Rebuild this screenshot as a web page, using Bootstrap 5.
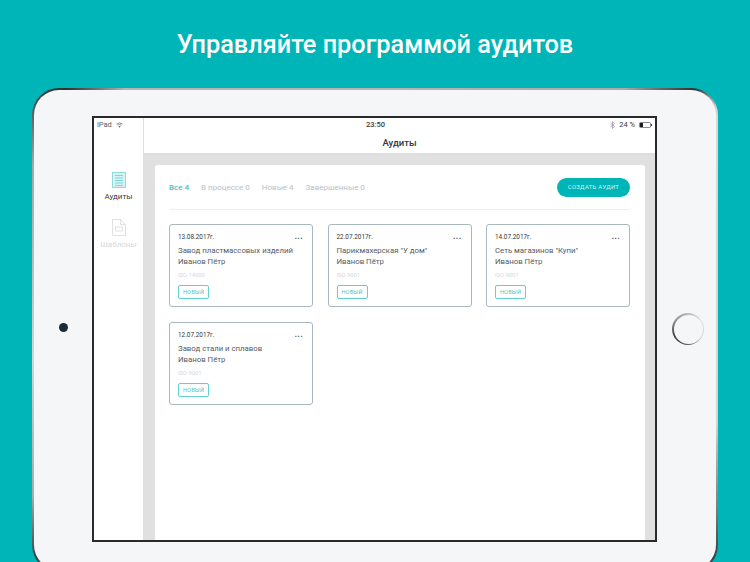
<!DOCTYPE html>
<html lang="ru">
<head>
  <meta charset="UTF-8" />
  <title>Аудиты</title>
  <meta name="viewport" content="width=device-width, initial-scale=1" />
  <link href="https://cdn.jsdelivr.net/npm/bootstrap@5.3.3/dist/css/bootstrap.min.css" rel="stylesheet">
  <style>
    html, body {
      height: 562px;
      overflow: hidden;
    }
    body {
      background: #00b5b8;
      font-family: Roboto, "Liberation Sans", sans-serif;
      color: #4a4f57;
    }
    .promo-title {
      height: 88px;
      padding-top: 29px;
      margin: 0;
      font-size: 25.3px;
      font-weight: 500;
      line-height: 32px;
      color: #fff;
      text-align: center;
    }
    .device-edge {
      position: relative;
      width: 686px;
      height: 484px;
      margin-left: 32px;
      padding: 2px;
      border-radius: 27px;
      background: conic-gradient(#b4b6b8 0deg, #a9abad 46deg, #2e3032 53deg, #d6d8d9 57deg, #d2d4d5 105deg, #77797b 118deg, #3a3c3e 124deg, #999 128deg, #999 232deg, #3a3c3e 236deg, #a8aaac 244deg, #d2d4d5 265deg, #a3a5a7 296deg, #4a4c4e 304deg, #2e3032 308deg, #b4b6b8 314deg);
    }
    .device-body {
      height: 100%;
      padding: 26px 59px 0 58px;
      border-radius: 25px;
      background: #f5f6f8;
    }
    .device-camera {
      position: absolute;
      left: 27px;
      top: 235px;
      width: 9px;
      height: 9px;
      border-radius: 50%;
      background: #1c2b3a;
    }
    .device-home {
      position: absolute;
      left: 640px;
      top: 225px;
      width: 32px;
      height: 32px;
      border-radius: 50%;
      padding: 1.5px;
      background: conic-gradient(#b8babc, #e4e5e6, #d0d1d2, #5a5c5e, #3a3c3e, #8e9092, #b8babc);
    }
    .device-home span {
      display: block;
      height: 100%;
      border-radius: 50%;
      background: #f5f6f8;
    }
    .device-screen {
      width: 565px;
      height: 426px;
      border: 2px solid #2a2a2c;
      background: #fff;
    }
    .side-rail {
      width: 50px;
      flex: none;
      border-right: 1px solid #dedede;
      padding-top: 54px;
    }
    .side-item {
      font-size: 8px;
      line-height: 12px;
      color: #3c3f44;
      margin-bottom: 16px;
    }
    .side-item svg {
      display: block;
      margin: 0 auto 3px;
    }
    .side-item.is-off {
      color: #d5d7da;
    }
    .status-line {
      height: 13px;
      padding: 0 3px;
      font-size: 7.5px;
      line-height: 13px;
      color: #3a3a3c;
    }
    .status-left {
      width: 219px;
    }
    .side-status {
      position: absolute;
      left: 3px;
      top: 0;
      height: 13px;
      font-size: 7.5px;
      line-height: 13px;
      color: #5a5c60;
    }
    .screen-title {
      height: 23px;
      font-size: 9.5px;
      font-weight: 500;
      line-height: 23px;
      color: #33363b;
      text-align: center;
      border-bottom: 1px solid #dcdcdc;
    }
    .work-area {
      background: #e0e0e0;
      padding: 11px 10px 0 11px;
      min-height: 0;
    }
    .audit-panel {
      height: 100%;
      background: #fff;
      border-radius: 3px 3px 0 0;
      padding: 13px 15px 0 14px;
    }
    .tabs-row {
      height: 32px;
      border-bottom: 1px solid #eceef0;
      margin-bottom: 14px;
    }
    .tab-link {
      font-size: 8px;
      color: #b6c1c8;
      text-decoration: none;
      margin-right: 12px;
      margin-top: 4px;
    }
    .tab-link.is-on {
      color: #41c4c6;
      font-weight: 500;
    }
    .create-btn {
      width: 73px;
      height: 19px;
      padding: 0;
      border: 0;
      border-radius: 10px;
      background: #00b5b8;
      color: #d2f3f3;
      font-size: 5.9px;
      letter-spacing: .3px;
      line-height: 19px;
    }
    .audit-grid {
      display: grid;
      grid-template-columns: repeat(3, 144px);
      gap: 15px 14.5px;
    }
    .audit-card {
      height: 83px;
      border: 1px solid #a9b7bf;
      border-radius: 3px;
      padding: 7px 8px 0 8px;
    }
    .audit-date {
      font-size: 6.4px;
      line-height: 11px;
      color: #33363b;
    }
    .audit-more {
      font-size: 9px;
      line-height: 9px;
      font-weight: 700;
      letter-spacing: .2px;
      color: #5c6570;
      margin-right: 1px;
    }
    .audit-name {
      margin-top: 2px;
      font-size: 7.8px;
      line-height: 11px;
      color: #565b63;
    }
    .audit-iso {
      margin-top: 4px;
      font-size: 5.8px;
      line-height: 9px;
      color: #d3d6e0;
    }
    .audit-tag {
      width: 31px;
      height: 14px;
      margin-top: 5px;
      border: 1px solid #62cfd1;
      border-radius: 2px;
      font-size: 5.6px;
      line-height: 12px;
      letter-spacing: .2px;
      color: #52c6c8;
      text-align: center;
    }
  </style>
</head>
<body>

<h1 class="promo-title">Управляйте программой аудитов</h1>

<div class="device-edge">
  <div class="device-body">
    <div class="device-screen d-flex">

      <div class="side-rail text-center flex-shrink-0 position-relative">
        <div class="side-status d-flex align-items-center gap-1">
          iPad
          <svg width="7" height="6" viewBox="0 0 8 6" fill="none" stroke="#5a5c60" stroke-width=".8"><path d="M.5 2Q4 -1 7.500 2M1.800 3.300Q4 1.500 6.200 3.300"/><path d="M4 6L2.800 4.500Q4 3.700 5.200 4.500Z" fill="#5a5c60" stroke="none"/></svg>
        </div>
        <div class="side-item">
          <svg width="14" height="16" viewBox="0 0 14 16" fill="none" stroke="#8fdcdd" stroke-width="1">
            <rect x=".5" y=".5" width="13" height="15" fill="#d8f3f3"/>
            <path d="M3 3.500h8M3 6h8M3 8.500h8M3 11h8M3 13.500h8" stroke="#7fd6d8"/>
          </svg>
          Аудиты
        </div>
        <div class="side-item is-off">
          <svg width="14" height="17" viewBox="0 0 14 17" fill="none" stroke="#dfe1e3" stroke-width="1">
            <path d="M.5 .5h8l5 5v11H.5z"/>
            <path d="M8.500 .5v5h5"/>
            <rect x="3.500" y="8" width="7" height="4"/>
          </svg>
          Шаблоны
        </div>
      </div>

      <div class="flex-grow-1 d-flex flex-column">
        <div class="status-line d-flex">
          <div class="status-left"></div>
          <div class="fw-medium">23:50</div>
          <div class="flex-grow-1 d-flex justify-content-end align-items-center gap-1">
            <svg width="5" height="8" viewBox="0 0 5 8" fill="none" stroke="#9a9c9f" stroke-width=".8"><path d="M.5 2l4 3.500L2.500 7.500V.5L4.500 2.500.5 6"/></svg>
            24 %
            <svg width="13" height="6" viewBox="0 0 13 6"><rect x=".5" y=".5" width="11" height="5" rx="1" fill="none" stroke="#3a3a3c" stroke-width=".6"/><rect x="1" y="1" width="3" height="4" fill="#1c1c1e"/><rect x="12" y="2" width="1" height="2" fill="#3a3a3c"/></svg>
          </div>
        </div>
        <div class="screen-title">Аудиты</div>

        <div class="work-area flex-grow-1">
          <div class="audit-panel">
            <div class="tabs-row d-flex justify-content-between">
              <div class="d-flex align-items-start">
                <a class="tab-link is-on" href="#">Все 4</a>
                <a class="tab-link" href="#">В процессе 0</a>
                <a class="tab-link" href="#">Новые 4</a>
                <a class="tab-link" href="#">Завершенные 0</a>
              </div>
              <button class="create-btn" type="button">СОЗДАТЬ АУДИТ</button>
            </div>

            <div class="audit-grid">
              <div class="audit-card bg-white">
                <div class="d-flex justify-content-between"><span class="audit-date">13.08.2017г.</span><span class="audit-more">...</span></div>
                <div class="audit-name">Завод пластмассовых изделий<br>Иванов Пётр</div>
                <div class="audit-iso">ISO 14000</div>
                <div class="audit-tag">НОВЫЙ</div>
              </div>
              <div class="audit-card bg-white">
                <div class="d-flex justify-content-between"><span class="audit-date">22.07.2017г.</span><span class="audit-more">...</span></div>
                <div class="audit-name">Парикмахерская "У дом"<br>Иванов Пётр</div>
                <div class="audit-iso">ISO 9001</div>
                <div class="audit-tag">НОВЫЙ</div>
              </div>
              <div class="audit-card bg-white">
                <div class="d-flex justify-content-between"><span class="audit-date">14.07.2017г.</span><span class="audit-more">...</span></div>
                <div class="audit-name">Сеть магазинов "Купи"<br>Иванов Пётр</div>
                <div class="audit-iso">ISO 9001</div>
                <div class="audit-tag">НОВЫЙ</div>
              </div>
              <div class="audit-card bg-white">
                <div class="d-flex justify-content-between"><span class="audit-date">12.07.2017г.</span><span class="audit-more">...</span></div>
                <div class="audit-name">Завод стали и сплавов<br>Иванов Пётр</div>
                <div class="audit-iso">ISO 9001</div>
                <div class="audit-tag">НОВЫЙ</div>
              </div>
            </div>
          </div>
        </div>
      </div>

    </div>
  </div>
  <div class="device-camera"></div>
  <div class="device-home"><span></span></div>
</div>

<script src="https://cdn.jsdelivr.net/npm/bootstrap@5.3.3/dist/js/bootstrap.bundle.min.js"></script>
</body>
</html>
